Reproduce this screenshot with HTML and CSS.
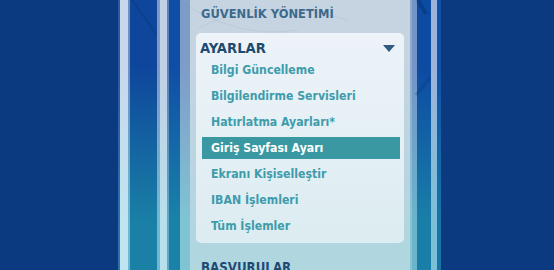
FILE: index.html
```html
<!DOCTYPE html>
<html lang="tr">
<head>
    <meta charset="UTF-8">
    <meta name="viewport" content="width=device-width, initial-scale=1.0">
    <title>Ayarlar</title>
    <link rel="stylesheet" href="styles.css">
</head>
<body>
    <div class="frame">
        <div class="stripe s1"></div>
        <div class="stripe s2"></div>
        <div class="stripe s3"></div>
        <div class="stripe s4"></div>
        <div class="stripe s5"></div>
        <div class="stripe s6"></div>
        <div class="stripe s7"></div>
        <div class="stripe s8"></div>
        <div class="stripe s9"></div>

        <div class="panel">
            <div class="section-title">GÜVENLİK YÖNETİMİ</div>

            <div class="box">
                <div class="box-head">
                    <span>AYARLAR</span>
                    <svg class="arrow" width="12" height="7" viewBox="0 0 12 7"><path d="M0 0H12L6 7Z" fill="#2c5a80"/></svg>
                </div>
                <ul class="menu">
                    <li>Bilgi Güncelleme</li>
                    <li>Bilgilendirme Servisleri</li>
                    <li>Hatırlatma Ayarları*</li>
                    <li class="active">Giriş Sayfası Ayarı</li>
                    <li>Ekranı Kişiselleştir</li>
                    <li>IBAN İşlemleri</li>
                    <li>Tüm İşlemler</li>
                </ul>
            </div>

            <div class="section-title next">BAŞVURULAR</div>
        </div>

        <div class="stripe r1"></div>
        <div class="stripe r2"></div>
        <div class="stripe r3"></div>
        <div class="stripe r4"></div>
        <div class="stripe r5"></div>

        <!-- faint swoosh lines of the background artwork -->
        <svg class="lines" width="323" height="270" viewBox="0 0 323 270">
            <path d="M14 0 L38 34" stroke="#05306e" stroke-opacity="0.3" stroke-width="1.5" fill="none"/>
            <path d="M60 0 Q120 40 180 30" stroke="#5a7898" stroke-opacity="0.1" stroke-width="1" fill="none"/>
            <path d="M80 28 Q150 -5 230 20" stroke="#5a7898" stroke-opacity="0.1" stroke-width="1" fill="none"/>
            <path d="M300 0 L308 14" stroke="#05306e" stroke-opacity="0.45" stroke-width="4" fill="none"/>
            <path d="M298 95 L312 78" stroke="#05306e" stroke-opacity="0.25" stroke-width="3" fill="none"/>
        </svg>
    </div>
</body>
</html>
```

FILE: styles.css
```css
body {
    margin: 0;
    background: #0b3a80;
    font-family: "DejaVu Sans Condensed", "DejaVu Sans", Verdana, sans-serif;
    font-weight: bold;
    overflow: hidden;
}

.frame {
    position: relative;
    display: flex;
    height: 270px;
    margin-left: 118px;
    width: 323px;
}

.stripe {
    background: linear-gradient(var(--top) 25%, var(--bot) 82%);
}
.s1 { width: 2px;  --top: #2a5aa0; --bot: #3070b0; }
.s2 { width: 8px;  --top: #c8d8ec; --bot: #c0e4f0; }
.s3 { width: 2px;  --top: #7090c0; --bot: #70b8d0; }
.s4 { width: 27px; --top: #0e469c; --bot: #1a80a6; }
.s5 { width: 3px;  --top: #8098c8; --bot: #70b8d0; }
.s6 { width: 7px;  --top: #c0d0e6; --bot: #b8e0ec; }
.s7 { width: 2px;  --top: #6080b8; --bot: #60a8c8; }
.s8 { width: 11px; --top: #0f4ea6; --bot: #1a82a8; }
.s9 { width: 10px; --top: #7e9cc8; --bot: #80c4d4; }

.r1 { width: 2px;  --top: #90a8cc; --bot: #88c4d4; }
.r2 { width: 5px;  --top: #7494c8; --bot: #6ab4cc; }
.r3 { width: 14px; --top: #0d4aa2; --bot: #1a7fa8; }
.r4 { width: 6px;  --top: #9cb4da; --bot: #7cc0d8; }
.r5 { width: 4px;  --top: #1050a8; --bot: #1a74a8; }

.panel {
    width: 208px;
    padding: 0 6px;
    background: linear-gradient(#c6d4e2 20%, #b0d6e0 90%);
}

.section-title {
    height: 33px;
    line-height: 28px;
    padding-left: 5px;
    font-size: 12.8px;
    color: #3c6a8c;
}
.section-title.next {
    margin-top: 11px;
    font-size: 13.2px;
    color: #1e4a72;
}

.box {
    border-radius: 5px;
    background: linear-gradient(#edf3f8, #dcecf1);
    padding-bottom: 6px;
}

.box-head {
    display: flex;
    justify-content: space-between;
    align-items: center;
    height: 23px;
    padding: 3px 9px 0 4px;
    font-size: 14.6px;
    color: #1d4a6e;
}
.arrow {
    margin-top: 1px;
}

.menu {
    list-style: none;
    margin: 0;
    padding: 0 4px 0 6px;
}
.menu li {
    height: 22px;
    line-height: 23px;
    margin-bottom: 4px;
    padding-left: 9px;
    font-size: 12.2px;
    color: #3e9cab;
}
.menu li:last-child {
    margin-bottom: 0;
}
.menu li.active {
    background: #3a98a2;
    color: #ffffff;
}

.lines {
    position: absolute;
    left: 0;
    top: 0;
    pointer-events: none;
}
```
